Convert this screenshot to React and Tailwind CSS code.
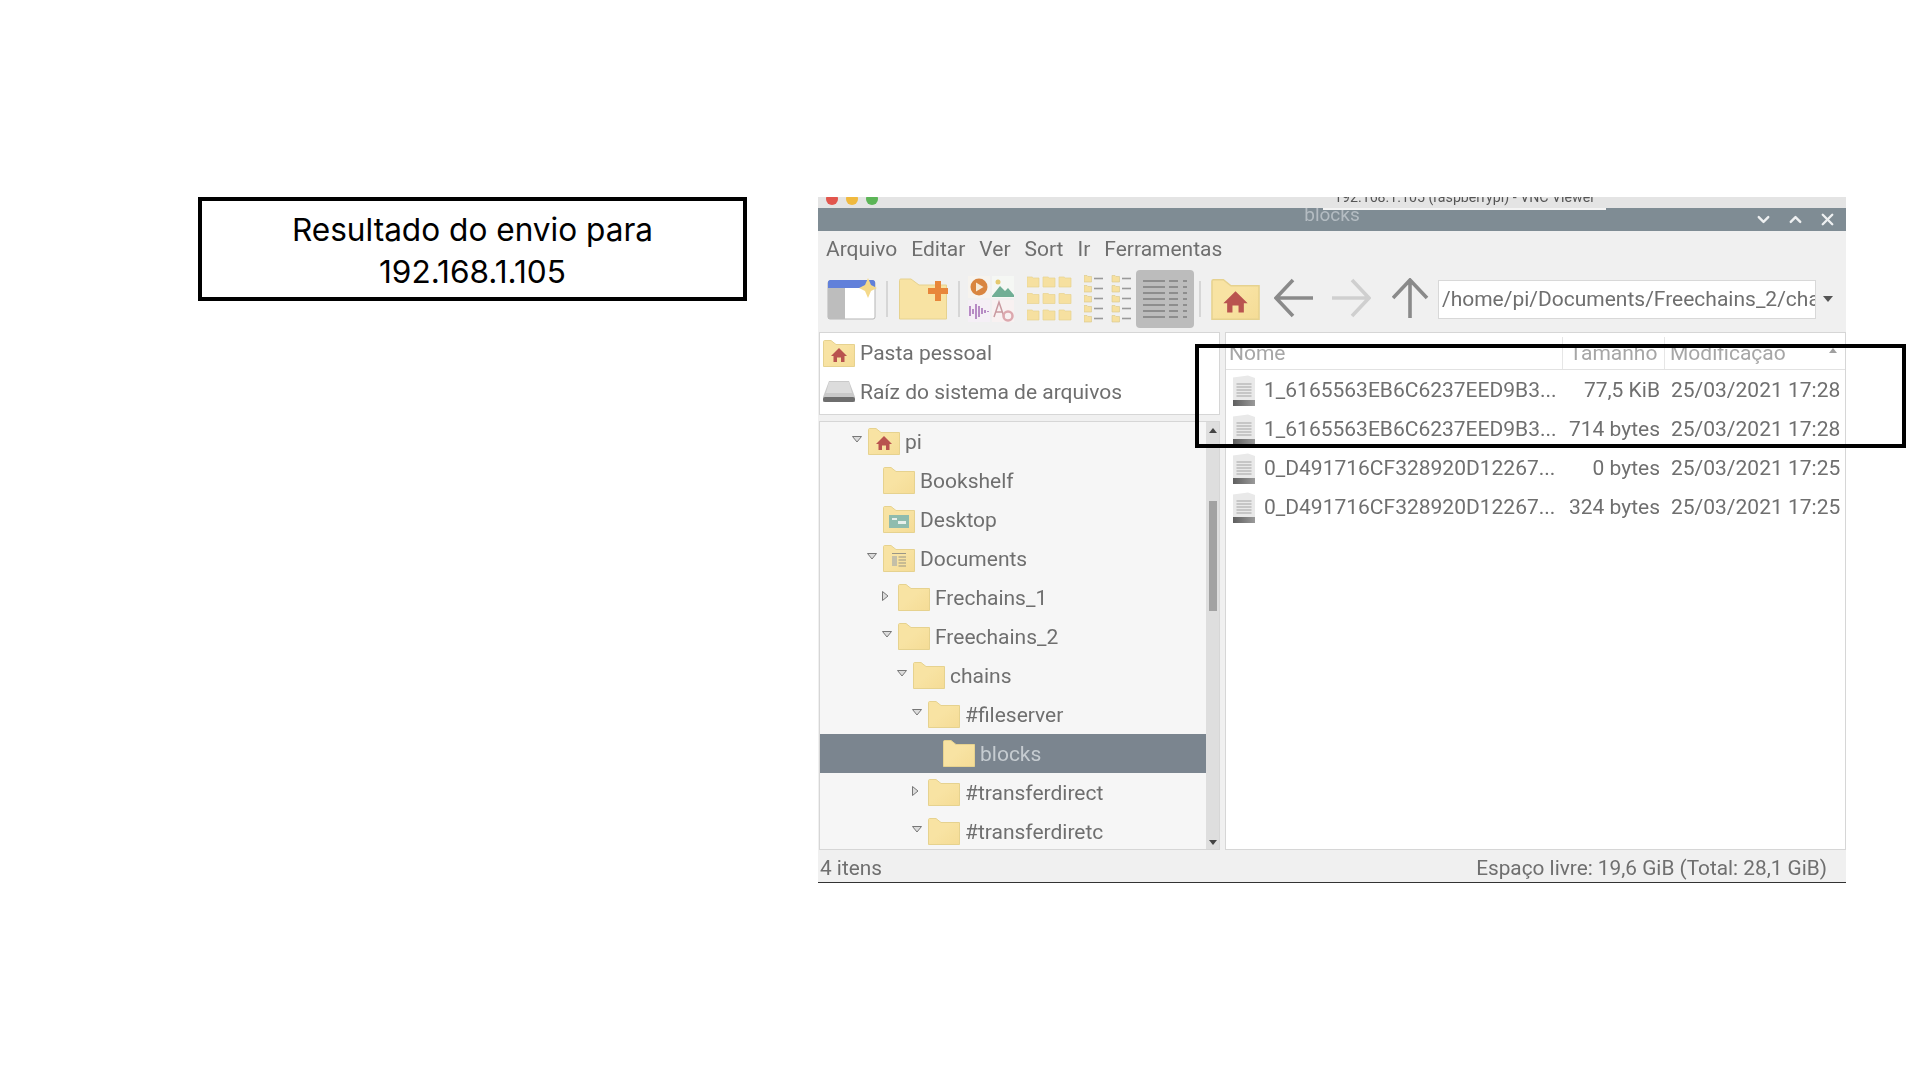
import { ChevronDown, ChevronUp, X } from "lucide-react"

const FONT = "font-['Roboto','Liberation_Sans',sans-serif]"

const TREE = [
  { label: "pi", depth: 0, arrow: "down", icon: "home" },
  { label: "Bookshelf", depth: 1 },
  { label: "Desktop", depth: 1, icon: "desktop" },
  { label: "Documents", depth: 1, arrow: "down", icon: "docs" },
  { label: "Frechains_1", depth: 2, arrow: "right" },
  { label: "Freechains_2", depth: 2, arrow: "down" },
  { label: "chains", depth: 3, arrow: "down" },
  { label: "#fileserver", depth: 4, arrow: "down" },
  { label: "blocks", depth: 5, selected: true },
  { label: "#transferdirect", depth: 4, arrow: "right" },
  { label: "#transferdiretc", depth: 4, arrow: "down" },
]

const FILES = [
  { name: "1_6165563EB6C6237EED9B3...", size: "77,5 KiB", date: "25/03/2021 17:28" },
  { name: "1_6165563EB6C6237EED9B3...", size: "714 bytes", date: "25/03/2021 17:28" },
  { name: "0_D491716CF328920D12267...", size: "0 bytes", date: "25/03/2021 17:25" },
  { name: "0_D491716CF328920D12267...", size: "324 bytes", date: "25/03/2021 17:25" },
]

function Folder({ icon, w = 32, h = 27 }) {
  return (
    <svg width={w} height={h} viewBox="0 0 32 27" className="shrink-0">
      <defs>
        <linearGradient id="fold" x1="0" y1="0" x2="1" y2="1">
          <stop offset="0.45" stopColor="#f8e3a3" />
          <stop offset="1" stopColor="#f5dc96" />
        </linearGradient>
      </defs>
      <path d="M0.5 26.5V1.5C0.5 1 1 0.5 1.5 0.5H8L13 4.5H31.5V26.5Z" fill="url(#fold)" stroke="#e6d28f" />
      {icon === "home" && (
        <g fill="#b9534f">
          <path d="M16 8L24 16H21.5V22H18V17.5H14V22H10.5V16H8Z" />
        </g>
      )}
      {icon === "desktop" && (
        <g>
          <rect x="6" y="9" width="20" height="13" fill="#8fbcae" />
          <rect x="9" y="12" width="5" height="2" fill="#e8f0ec" />
          <rect x="15" y="15" width="8" height="3" fill="#e8f0ec" />
        </g>
      )}
      {icon === "docs" && (
        <g>
          <rect x="9" y="11" width="5" height="10" fill="#c4bfa8" />
          <path d="M9 8.5H23M15.5 12H23M15.5 15H23M15.5 18H23M15.5 21H23" stroke="#9a9686" strokeWidth="1.2" />
        </g>
      )}
    </svg>
  )
}

function FileIcon() {
  return (
    <svg width="22" height="31" viewBox="0 0 22 31" className="shrink-0">
      <defs>
        <linearGradient id="filebase" x1="0" y1="0" x2="1" y2="0">
          <stop offset="0" stopColor="#5f5f5f" />
          <stop offset="1" stopColor="#9a9a9a" />
        </linearGradient>
      </defs>
      <path d="M0 2.5L15 0.5L22 3V31H0Z" fill="#e9e9e9" />
      <path d="M3.5 9H18.5M3.5 12H18.5M3.5 15H18.5M3.5 18H18.5M3.5 21H18.5" stroke="#a3a3a3" strokeWidth="1.2" />
      <rect x="0" y="25" width="22" height="6" fill="url(#filebase)" />
    </svg>
  )
}

function TreeArrow({ dir }) {
  if (dir === "down") {
    return (
      <svg width="10" height="7" viewBox="0 0 10 7">
        <path d="M0.5 0.5H9.5L5 6Z" fill="#dcdcdc" stroke="#777777" />
      </svg>
    )
  }
  return (
    <svg width="7" height="10" viewBox="0 0 7 10">
      <path d="M0.5 0.5V9.5L6 5Z" fill="#dcdcdc" stroke="#777777" />
    </svg>
  )
}

function NewWindowIcon() {
  return (
    <svg width="50" height="42" viewBox="0 0 50 42" className="shrink-0">
      <rect x="1" y="3" width="47" height="38" rx="2" fill="#ffffff" stroke="#b5b5b5" />
      <rect x="1" y="10" width="17" height="31" fill="#bdbdbd" />
      <path d="M1 4C1 3 2 2 3 2H46C47 2 48 3 48 4V10H1Z" fill="#6180da" />
      <path d="M41 0L44 7L50 10L44 13L41 20L38 13L32 10L38 7Z" fill="#f4d98a" />
    </svg>
  )
}

function NewFolderIcon() {
  return (
    <svg width="50" height="42" viewBox="0 0 50 42" className="shrink-0">
      <path d="M0.5 41V2.5C0.5 1.5 1 1 2 1H12L20 7H47.5V41Z" fill="#f8e3a3" stroke="#e6d28f" />
      <path d="M36 3H42V10H49V16H42V23H36V16H29V10H36Z" fill="#e8863a" />
    </svg>
  )
}

function MediaIcon() {
  return (
    <svg width="46" height="46" viewBox="0 0 46 46" className="shrink-0">
      <rect x="0" y="0" width="22" height="22" fill="#f6f3ee" />
      <circle cx="11" cy="11" r="8.5" fill="#d9853f" />
      <path d="M8 6.5L15.5 11L8 15.5Z" fill="#f6ead8" />
      <rect x="24" y="0" width="22" height="22" fill="#f5f7f4" />
      <circle cx="30" cy="6" r="2.5" fill="#e5c970" />
      <path d="M24 20L32 10L37 15L40 12L46 19V21H24Z" fill="#6fae95" />
      <rect x="0" y="24" width="22" height="22" fill="#f5eff6" />
      <path d="M2 30V40M5 33V38M8 28V43M11 30V41M14 32V38M17 34V37M20 35V36" stroke="#a873b8" strokeWidth="1.6" />
      <rect x="24" y="24" width="22" height="22" fill="#f8f1f1" />
      <path d="M26 41L31 26L36 41M28 36H34" fill="none" stroke="#c99aa0" strokeWidth="1.5" />
      <circle cx="40" cy="40" r="4.5" fill="none" stroke="#dca8ae" strokeWidth="2.5" />
    </svg>
  )
}

function IconGridIcon() {
  const cells = []
  for (let r = 0; r < 3; r++) {
    for (let c = 0; c < 3; c++) {
      cells.push(
        <path
          key={`${r}-${c}`}
          transform={`translate(${c * 16} ${r * 16.5})`}
          d="M0 11V1H5L6.5 2H12V11Z"
          fill="#f6e0a0"
          stroke="#e6d28f"
          strokeWidth="0.7"
        />
      )
    }
  }
  return (
    <svg width="46" height="46" viewBox="0 0 46 46" className="shrink-0">
      {cells}
    </svg>
  )
}

function CompactIcon() {
  const items = []
  for (let c = 0; c < 2; c++) {
    for (let r = 0; r < 5; r++) {
      items.push(
        <g key={`${c}-${r}`} transform={`translate(${c * 28} ${r * 10})`}>
          <path d="M0 7V0.5H3L4 1.5H7.5V7Z" fill="#f6e0a0" stroke="#d9c789" strokeWidth="0.6" />
          <path d="M10 3.5H19" stroke="#9a9a9a" strokeWidth="1.6" />
        </g>
      )
    }
  }
  return (
    <svg width="47" height="48" viewBox="0 0 47 48" className="shrink-0">
      {items}
    </svg>
  )
}

function DetailIcon() {
  const lines = []
  for (let r = 0; r < 7; r++) {
    lines.push(
      <g key={r} transform={`translate(0 ${r * 6})`} stroke="#7e7e7e" strokeWidth="1.4">
        <path d="M0 1H22M26 1H35M40 1H44" />
      </g>
    )
  }
  return (
    <div className="flex h-[58px] w-[58px] shrink-0 items-center justify-center rounded-sm bg-[#bcbcbc]">
      <svg width="44" height="38" viewBox="0 0 44 38">
        {lines}
      </svg>
    </div>
  )
}

function Separator() {
  return <div className="h-[36px] w-[2px] shrink-0 bg-[#d6d6d6]" />
}

function NavArrow({ dir, color }) {
  const d = {
    left: "M39 20H2M19 2L2 20L19 38",
    right: "M1 20H38M21 2L38 20L21 38",
    up: "M18 40V2M1 20L18 2L35 20",
  }[dir]
  return (
    <svg width="40" height="42" viewBox="0 0 40 42" className="shrink-0">
      <path d={d} fill="none" stroke={color} strokeWidth="3.6" />
    </svg>
  )
}

function Toolbar() {
  return (
    <div className="flex h-[64px] items-center pl-[9px]">
      <NewWindowIcon />
      <div className="ml-[9px]"><Separator /></div>
      <div className="ml-[11px]"><NewFolderIcon /></div>
      <div className="ml-[9px]"><Separator /></div>
      <div className="ml-[8px]"><MediaIcon /></div>
      <div className="ml-[13px]"><IconGridIcon /></div>
      <div className="ml-[11px]"><CompactIcon /></div>
      <div className="ml-[5px]"><DetailIcon /></div>
      <div className="ml-[5px]"><Separator /></div>
      <div className="ml-[10px]"><Folder icon="home" w={49} h={41} /></div>
      <div className="ml-[14px]"><NavArrow dir="left" color="#8a8a8a" /></div>
      <div className="ml-[17px]"><NavArrow dir="right" color="#cfcfcf" /></div>
      <div className="ml-[21px]"><NavArrow dir="up" color="#8a8a8a" /></div>
      <div className="ml-[6px] flex h-[39px] w-[378px] items-center overflow-hidden border border-[#d8d8d8] bg-white pl-[3px] text-[21px] whitespace-nowrap">
        /home/pi/Documents/Freechains_2/chains/#fileserver
      </div>
      <svg width="10" height="6" viewBox="0 0 10 6" className="ml-[7px]">
        <path d="M0 0H10L5 6Z" fill="#555555" />
      </svg>
    </div>
  )
}

function Places() {
  return (
    <div className="h-[83px] border border-[#d6d6d6] bg-white">
      <div className="flex h-[39px] items-center pt-[2px] pl-[3px]">
        <Folder icon="home" />
        <span className="ml-[5px]">Pasta pessoal</span>
      </div>
      <div className="flex h-[39px] items-center pl-[3px]">
        <svg width="32" height="24" viewBox="0 0 32 24" className="shrink-0">
          <path d="M6 1H26L32 17V22H0V17Z" fill="#c9c9c9" />
          <path d="M6 2H26L29 13H3Z" fill="#dcdcdc" />
          <rect x="0" y="17" width="32" height="5" rx="2" fill="#6e6e6e" />
        </svg>
        <span className="mt-[2px] ml-[5px]">Raíz do sistema de arquivos</span>
      </div>
    </div>
  )
}

function TreeRow({ item }) {
  return (
    <div
      className={`flex h-[39px] items-center ${item.selected ? "bg-[#7b858f] text-[#c6ccd1]" : ""}`}
      style={{ paddingLeft: 30 + item.depth * 15 }}
    >
      <div className="flex w-[18px] shrink-0 items-center pb-[4px] pl-[2px]">
        {item.arrow && <TreeArrow dir={item.arrow} />}
      </div>
      <Folder icon={item.icon} />
      <span className="mt-[1px] ml-[5px]">{item.label}</span>
    </div>
  )
}

function Tree() {
  return (
    <div className="mt-[6px] flex h-[429px] overflow-hidden border border-[#d6d6d6] bg-[#f6f6f6]">
      <div className="min-w-0 flex-1">
        {TREE.map((item) => (
          <TreeRow key={item.label} item={item} />
        ))}
      </div>
      <div className="flex w-[13px] shrink-0 flex-col items-center bg-[#dedede]">
        <svg width="8" height="5" viewBox="0 0 8 5" className="mt-[6px] shrink-0">
          <path d="M4 0L8 5H0Z" fill="#444444" />
        </svg>
        <div className="mt-[68px] h-[110px] w-[8px] shrink-0 bg-[#a2a2a2]" />
        <svg width="8" height="5" viewBox="0 0 8 5" className="mt-auto mb-[4px] shrink-0">
          <path d="M0 0H8L4 5Z" fill="#444444" />
        </svg>
      </div>
    </div>
  )
}

function FileList() {
  return (
    <div className="ml-[5px] h-[518px] flex-1 border border-[#d6d6d6] bg-white">
      <div className="flex h-[37px] items-center border-b border-[#e2e2e2] pt-[4px] text-[#a6a6a6]">
        <div className="flex h-full w-[337px] items-center border-r border-[#e6e6e6] pl-[3px]">Nome</div>
        <div className="flex h-full w-[102px] items-center justify-center border-r border-[#e6e6e6]">Tamanho</div>
        <div className="flex h-full flex-1 items-center justify-between pr-[8px] pl-[5px]">
          <span>Modificação</span>
          <svg width="8" height="5" viewBox="0 0 8 5" className="mb-[6px]">
            <path d="M4 0L8 5H0Z" fill="#a0a0a0" />
          </svg>
        </div>
      </div>
      {FILES.map((f, i) => (
        <div key={i} className="flex h-[39px] items-center whitespace-nowrap pt-[1px]">
          <div className="flex w-[337px] items-center pl-[7px]">
            <FileIcon />
            <span className="ml-[9px]">{f.name}</span>
          </div>
          <div className="w-[97px] text-right">{f.size}</div>
          <div className="ml-[11px]">{f.date}</div>
        </div>
      ))}
    </div>
  )
}

function FileManager() {
  return (
    <div className={`relative ml-[71px] flex h-[686px] w-[1028px] shrink-0 flex-col bg-[#f0f0f0] text-[21px] leading-none text-[#6f6f6f] blur-[0.4px] ${FONT}`}>
      {/* VNC viewer strip, cut off at the top */}
      <div className="relative h-[11px] shrink-0 overflow-hidden bg-[#e4e4e4]">
        <div className="-mt-[4px] flex gap-[8px] pl-[8px]">
          <div className="h-[12px] w-[12px] rounded-full bg-[#e2554d]" />
          <div className="h-[12px] w-[12px] rounded-full bg-[#f0b93e]" />
          <div className="h-[12px] w-[12px] rounded-full bg-[#5cb557]" />
        </div>
        <div className="absolute top-[-7px] left-[516px] text-[14.2px] leading-[15px] whitespace-nowrap text-[#555555]">
          192.168.1.105 (raspberrypi) - VNC Viewer
        </div>
      </div>
      <div className="relative flex h-[23px] shrink-0 items-center justify-center overflow-hidden bg-[#7f8c94] text-[19px] text-[#b4bcc2]">
        <span className="mb-[10px]">blocks</span>
        <div className="absolute top-0 left-[505px] h-[2px] w-[283px] bg-[#f4f4f4]" />
        <div className="absolute top-0 right-[9px] flex h-full items-center gap-[13px] text-[#eef0f1]">
          <ChevronDown size={19} strokeWidth={3} />
          <ChevronUp size={19} strokeWidth={3} />
          <X size={19} strokeWidth={3} />
        </div>
      </div>
      <div className="flex h-[36px] shrink-0 items-center gap-[14px] pl-[8px]">
        <span>Arquivo</span>
        <span>Editar</span>
        <span>Ver</span>
        <span>Sort</span>
        <span>Ir</span>
        <span>Ferramentas</span>
      </div>
      <Toolbar />
      <div className="mt-[1px] flex h-[518px] shrink-0 pl-[1px]">
        <div className="w-[401px] shrink-0">
          <Places />
          <Tree />
        </div>
        <FileList />
      </div>
      <div className="flex flex-1 items-center justify-between border-b border-[#333333] pt-[4px] pr-[19px] pl-[2px] text-[20.8px]">
        <span>4 itens</span>
        <span>Espaço livre: 19,6 GiB (Total: 28,1 GiB)</span>
      </div>
      {/* highlight drawn over the window */}
      <div className="absolute top-[147px] left-[377px] h-[104px] w-[711px] border-4 border-black" />
    </div>
  )
}

export default function App() {
  return (
    <div className="flex h-[1080px] w-full items-start overflow-hidden bg-white pt-[197px] pl-[198px]">
      <div className="flex h-[104px] w-[549px] shrink-0 items-center justify-center border-4 border-black pt-[4px] text-center font-['Inter',sans-serif] text-[31.6px] leading-[42px] text-black">
        <div>
          Resultado do envio para
          <br />
          192.168.1.105
        </div>
      </div>
      <FileManager />
    </div>
  )
}
